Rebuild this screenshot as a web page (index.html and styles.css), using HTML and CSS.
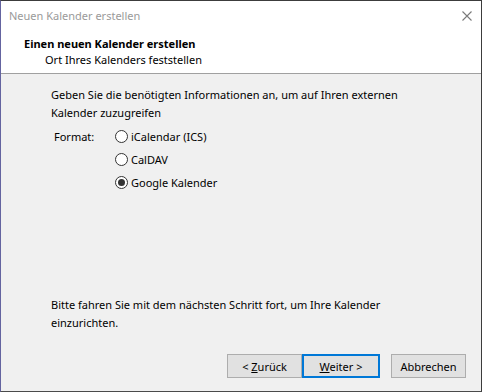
FILE: index.html
```html
<!DOCTYPE html>
<html lang="de">
<head>
<meta charset="utf-8">
<title>Neuen Kalender erstellen</title>
<link rel="stylesheet" href="styles.css">
</head>
<body>
<div class="window">
  <div class="titlebar">
    <span class="title">Neuen Kalender erstellen</span>
    <svg class="close" width="10" height="10" viewBox="0 0 10 10"><path d="M0.5 0.5L9.5 9.5M9.5 0.5L0.5 9.5" stroke="#7a7a7a" stroke-width="1.1" fill="none"/></svg>
  </div>
  <div class="header">
    <div class="h-title">Einen neuen Kalender erstellen</div>
    <div class="h-sub">Ort Ihres Kalenders feststellen</div>
  </div>
  <div class="content">
    <p class="text">Geben Sie die benötigten Informationen an, um auf Ihren externen Kalender zuzugreifen</p>
    <div class="format">
      <div class="format-label">Format:</div>
      <div class="options">
        <div class="option"><span class="radio"></span><span>iCalendar (ICS)</span></div>
        <div class="option"><span class="radio"></span><span>CalDAV</span></div>
        <div class="option"><span class="radio checked"></span><span>Google Kalender</span></div>
      </div>
    </div>
    <div class="spacer"></div>
    <p class="text">Bitte fahren Sie mit dem nächsten Schritt fort, um Ihre Kalender einzurichten.</p>
    <div class="buttons">
      <button class="btn">&lt; <u>Z</u>urück</button>
      <button class="btn default"><u>W</u>eiter &gt;</button>
      <button class="btn cancel">Abbrechen</button>
    </div>
  </div>
</div>
</body>
</html>
```
FILE: styles.css
```css
html, body {
  margin: 0;
  padding: 0;
  background: #f0f0f0;
}
body {
  font-family: "Noto Sans", "Open Sans", sans-serif;
  font-size: 11px;
  color: #000;
}
.window {
  width: 482px;
  height: 392px;
  box-sizing: border-box;
  border-top: 1px solid #3c3c3c;
  border-right: 1px solid #3c3c3c;
  border-bottom: 1px solid #4a4a4a;
  border-left: 1px solid #6464a0;
  display: flex;
  flex-direction: column;
  background: #f0f0f0;
}
.titlebar {
  height: 30px;
  background: #fff;
  display: flex;
  align-items: center;
  justify-content: space-between;
  padding-left: 8px;
  padding-right: 9px;
}
.title {
  color: #9a9a9a;
  line-height: 16px;
}
.close {
  display: block;
  margin-top: 0px;
}
.header {
  background: #fff;
  height: 42px;
  box-sizing: border-box;
  padding: 5px 0 0 23px;
  border-bottom: 1px solid #a0a0a0;
  line-height: 16px;
  height: 43px;
}
.h-title {
  font-weight: bold;
}
.h-sub {
  padding-left: 21px;
}
.content {
  flex: 1;
  display: flex;
  flex-direction: column;
  padding: 12px 15px 13px 50px;
}
.text {
  margin: 0;
  line-height: 18px;
  width: 360px;
}
.format {
  display: flex;
  margin-top: 3px;
  padding-left: 3px;
}
.format-label {
  width: 61px;
  line-height: 23px;
}
.option {
  display: flex;
  align-items: center;
  height: 23px;
  gap: 3px;
}
.radio {
  width: 13px;
  height: 13px;
  box-sizing: border-box;
  border: 1px solid #333;
  border-radius: 50%;
  background: #fff;
  display: flex;
  align-items: center;
  justify-content: center;
}
.radio.checked::after {
  content: "";
  width: 7px;
  height: 7px;
  border-radius: 50%;
  background: #333;
}
.spacer {
  flex: 1;
}
.buttons {
  display: flex;
  justify-content: flex-end;
  margin-top: 22px;
}
.btn {
  font-family: inherit;
  font-size: 11px;
  color: #000;
  width: 75px;
  height: 24px;
  box-sizing: border-box;
  background: #e1e1e1;
  border: 1px solid #adadad;
  padding: 0;
  margin: 0;
}
.btn.default {
  width: 78px;
  border: 2px solid #0078d7;
}
.btn.cancel {
  margin-left: 11px;
}
```
